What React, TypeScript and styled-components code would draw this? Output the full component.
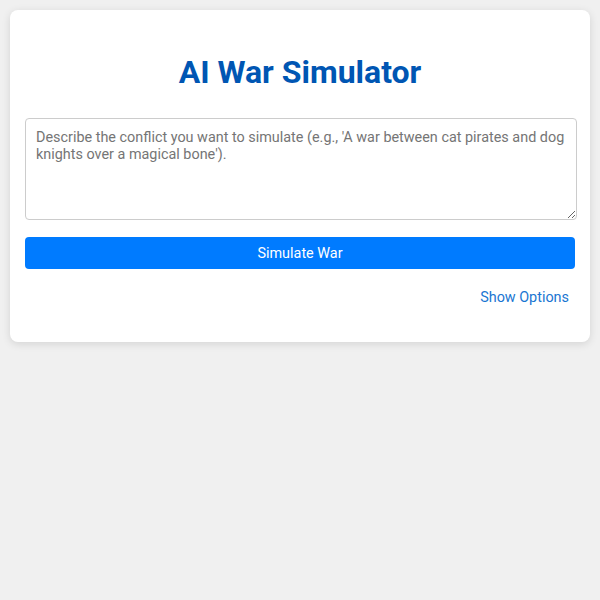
import React, { useState } from 'react'
import styled, { createGlobalStyle } from 'styled-components'

const GlobalStyle = createGlobalStyle`
  html, body {
    margin: 0;
    padding: 0;
    background: #f0f0f0;
    font-family: Roboto, "Liberation Sans", Arial, sans-serif;
  }
`

const Page = styled.main`
  padding: 10px;
`

const Card = styled.section`
  background: #ffffff;
  border-radius: 8px;
  box-shadow: 0 2px 8px rgba(0, 0, 0, 0.12);
  padding: 15px 15px 29px;
  display: flex;
  flex-direction: column;
`

const Title = styled.h1`
  margin: 28px 0 27px;
  text-align: center;
  color: #0056b3;
  font-size: 32px;
  font-weight: 700;
  line-height: 38px;
`

const Prompt = styled.textarea`
  box-sizing: border-box;
  width: calc(100% + 2px);
  height: 102px;
  padding: 11px 10px 10px;
  border: 1px solid #cccccc;
  border-radius: 4px;
  font-family: Roboto, "Liberation Sans", Arial, sans-serif;
  font-size: 14.4px;
  line-height: 16.5px;
  color: #333;
  resize: vertical;

  &::placeholder {
    color: #757575;
  }
`

const SimulateButton = styled.button`
  margin-top: 17px;
  height: 32px;
  border: none;
  border-radius: 4px;
  background: #007bff;
  color: #ffffff;
  font-family: inherit;
  font-size: 14.4px;
  cursor: pointer;
`

const Actions = styled.div`
  display: flex;
  justify-content: flex-end;
  margin-top: 13px;
`

const LinkButton = styled.button`
  background: none;
  border: none;
  padding: 6px;
  color: #1a76d2;
  font-family: inherit;
  font-size: 14.4px;
  line-height: 19px;
  cursor: pointer;
`

const App = () => {
  const [prompt, setPrompt] = useState('')
  const [showOptions, setShowOptions] = useState(false)

  return (
    <Page>
      <GlobalStyle />
      <Card>
        <Title>AI War Simulator</Title>
        <Prompt
          value={prompt}
          onChange={(e) => setPrompt(e.target.value)}
          placeholder="Describe the conflict you want to simulate (e.g., 'A war between cat pirates and dog knights over a magical bone')."
        />
        <SimulateButton>Simulate War</SimulateButton>
        <Actions>
          <LinkButton onClick={() => setShowOptions(!showOptions)}>
            {showOptions ? 'Hide Options' : 'Show Options'}
          </LinkButton>
        </Actions>
      </Card>
    </Page>
  )
}

export default App
